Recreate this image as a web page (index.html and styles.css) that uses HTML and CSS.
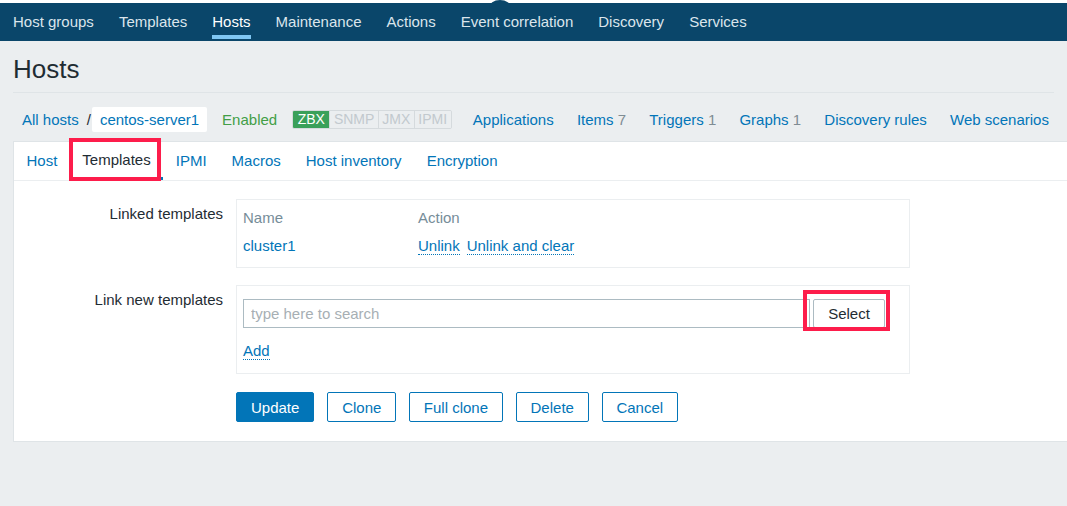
FILE: index.html
```html
<!DOCTYPE html>
<html lang="en">
<head>
<meta charset="utf-8">
<title>Hosts</title>
<link rel="stylesheet" href="styles.css">
</head>
<body>
<div class="topstrip"></div>
<nav class="topnav">
  <a class="nav-item">Host groups</a>
  <a class="nav-item">Templates</a>
  <a class="nav-item active">Hosts</a>
  <a class="nav-item">Maintenance</a>
  <a class="nav-item">Actions</a>
  <a class="nav-item">Event correlation</a>
  <a class="nav-item">Discovery</a>
  <a class="nav-item">Services</a>
</nav>
<header class="page-header"><h1>Hosts</h1></header>
<div class="crumbs">
  <a class="crumb-link">All hosts</a>
  <span class="crumb-sep">/</span>
  <span class="crumb-current">centos-server1</span>
  <span class="status-enabled">Enabled</span>
  <span class="badges">
    <span class="badge badge-on">ZBX</span><span class="badge">SNMP</span><span class="badge">JMX</span><span class="badge">IPMI</span>
  </span>
  <a class="crumb-nav">Applications</a>
  <a class="crumb-nav">Items <span class="count">7</span></a>
  <a class="crumb-nav">Triggers <span class="count">1</span></a>
  <a class="crumb-nav">Graphs <span class="count">1</span></a>
  <a class="crumb-nav">Discovery rules</a>
  <a class="crumb-nav">Web scenarios</a>
</div>
<main class="panel">
  <div class="tabs">
    <a class="tab">Host</a>
    <a class="tab tab-active">Templates</a>
    <a class="tab">IPMI</a>
    <a class="tab">Macros</a>
    <a class="tab">Host inventory</a>
    <a class="tab">Encryption</a>
  </div>
  <form class="form">
    <div class="form-row">
      <div class="form-label">Linked templates</div>
      <div class="field-box linked-box">
        <div class="t-row t-head">
          <span class="col-name">Name</span>
          <span class="col-action">Action</span>
        </div>
        <div class="t-row t-body">
          <a class="col-name link">cluster1</a>
          <span class="col-action"><a class="dotted">Unlink</a><a class="dotted">Unlink and clear</a></span>
        </div>
      </div>
    </div>
    <div class="form-row">
      <div class="form-label">Link new templates</div>
      <div class="field-box new-box">
        <div class="search-line">
          <input class="search-input" type="text" placeholder="type here to search">
          <button type="button" class="select-btn">Select</button>
        </div>
        <a class="dotted add-link">Add</a>
      </div>
    </div>
    <div class="buttons">
      <button type="button" class="btn btn-primary">Update</button>
      <button type="button" class="btn">Clone</button>
      <button type="button" class="btn">Full clone</button>
      <button type="button" class="btn">Delete</button>
      <button type="button" class="btn">Cancel</button>
    </div>
  </form>
</main>
</body>
</html>
```

FILE: styles.css
```css
* { box-sizing: border-box; }
html, body {
  margin: 0;
  padding: 0;
  background: #ebeef0;
  font-family: "Liberation Sans", Arial, sans-serif;
  font-size: 15px;
  color: #1f2c33;
  overflow: hidden;
}
a { color: #0275b8; text-decoration: none; cursor: pointer; }

.topstrip { height: 3px; background: #ffffff; }

.topnav {
  position: relative;
  height: 38px;
  background: #0a466a;
  display: flex;
  align-items: center;
  padding-left: 13px;
}
.topnav::before {
  content: "";
  position: absolute;
  left: 489px;
  top: -3px;
  width: 22px;
  height: 8px;
  border-radius: 50% 50% 0 0 / 100% 100% 0 0;
  background: #0a466a;
}
.nav-item {
  position: relative;
  color: #dbe5ec;
  margin-right: 25px;
  line-height: 38px;
  height: 38px;
}
.nav-item.active { color: #ffffff; }
.nav-item.active::after {
  content: "";
  position: absolute;
  left: 0;
  right: 0;
  bottom: 2px;
  height: 4px;
  background: #7fc6f2;
}

.page-header {
  margin: 0 13px;
  padding: 13px 0 8px;
  border-bottom: 1px solid #dfe4e7;
}
.page-header h1 {
  margin: 0;
  font-size: 26px;
  font-weight: normal;
  line-height: 30px;
  color: #1f2c33;
}

.crumbs {
  display: flex;
  align-items: center;
  height: 48px;
  padding: 14px 0 9px 22px;
}
.crumb-link { color: #0275b8; }
.crumb-sep { margin: 0 2px 0 8px; color: #1f2c33; }
.crumb-current {
  background: #ffffff;
  color: #0275b8;
  height: 25px;
  line-height: 25px;
  padding: 0 8px;
  border-radius: 2px;
  margin-left: -1px;
}
.status-enabled { color: #429e47; margin-left: 15px; }
.badges {
  display: flex;
  margin-left: 15px;
  margin-right: 9.6px;
  border: 1px solid #d5dadd;
  border-radius: 2px;
  overflow: hidden;
}
.badge {
  font-size: 14px;
  line-height: 17px;
  padding: 0 3.5px;
  color: #c2c9ce;
  background: #ebeef0;
  border-left: 1px solid #d5dadd;
}
.badge-on {
  background: #3aa05a;
  color: #ffffff;
  border-left: none;
  padding: 0 4.5px;
}
.crumb-nav { margin-left: 11.6px; margin-right: 11.6px; color: #0275b8; }
.count { color: #7f8c94; }

.panel {
  margin: 0 0 0 13px;
  background: #ffffff;
  border: 1px solid #dfe4e7;
  border-right: none;
}
.tabs {
  display: flex;
  height: 39px;
  border-bottom: 1px solid #ebeef0;
}
.tab {
  position: relative;
  padding: 0 12.5px;
  line-height: 38px;
  color: #0275b8;
}
.tab-active {
  color: #1f2c33;
  border-bottom: 3px solid #0275b8;
  line-height: 36px;
}
.tab-active::after {
  content: "";
  position: absolute;
  left: -1px;
  right: 2px;
  top: -4px;
  bottom: -4px;
  border: 4px solid #fd1d4b;
}

.form { padding: 18px 0 19px; }
.form-row { display: flex; align-items: flex-start; margin-bottom: 17px; }
.form-label {
  flex: 0 0 222px;
  text-align: right;
  padding-right: 13px;
  padding-top: 6px;
  line-height: 18px;
}
.field-box {
  width: 674px;
  border: 1px solid #ebeef0;
}
.linked-box { padding: 4px 6px 7px; }
.t-row { display: flex; align-items: center; }
.t-head { height: 26px; color: #768d99; }
.t-body { height: 30px; }
.col-name { width: 175px; }
.link { color: #0275b8; }
.dotted {
  color: #0275b8;
  border-bottom: 1px dotted #0275b8;
  line-height: 17px;
}
.col-action .dotted + .dotted { margin-left: 7px; }

.new-box { padding: 13px 6px 13px; }
.search-line { display: flex; }
.search-input {
  width: 567px;
  height: 29px;
  border: 1px solid #acbbc2;
  padding: 0 7px;
  font-family: inherit;
  font-size: 15px;
  color: #1f2c33;
  outline: none;
}
.search-input::placeholder { color: #a7afb4; }
.select-btn {
  position: relative;
  margin-left: 3px;
  width: 72px;
  height: 29px;
  background: #ffffff;
  border: 1px solid #acbbc2;
  border-radius: 2px;
  font-family: inherit;
  font-size: 15px;
  color: #1f2c33;
  padding: 0;
}
.select-btn::after {
  content: "";
  position: absolute;
  left: -11px;
  right: -6px;
  top: -10px;
  bottom: -4px;
  border: 4px solid #fd1d4b;
}
.add-link { display: inline-block; margin-top: 14px; }

.buttons { display: flex; padding-left: 222px; margin-top: 18px; }
.btn {
  height: 30px;
  padding: 0 13.75px;
  margin-right: 13px;
  background: #ffffff;
  border: 1px solid #0275b8;
  border-radius: 2px;
  color: #0275b8;
  font-family: inherit;
  font-size: 15px;
}
.btn-primary { background: #0275b8; color: #ffffff; padding: 0 14px; }
```
